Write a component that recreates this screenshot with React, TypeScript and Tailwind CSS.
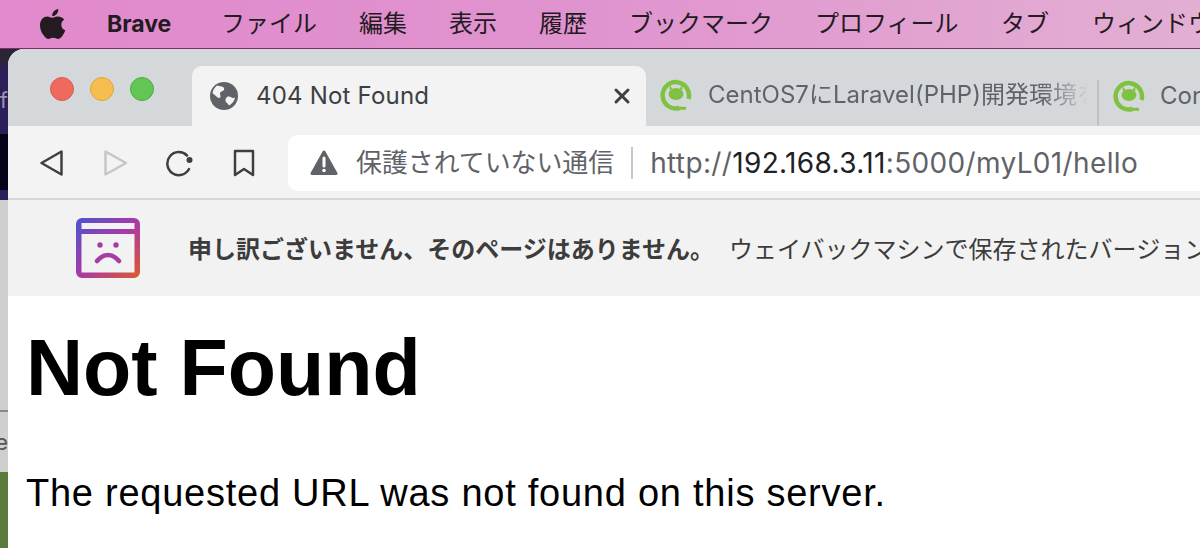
import type { ReactNode } from 'react';
import { X } from 'lucide-react';

const menus = [
  { label: 'ファイル', w: 'w-[138px]' },
  { label: '編集', w: 'w-[90px]' },
  { label: '表示', w: 'w-[90px]' },
  { label: '履歴', w: 'w-[90px]' },
  { label: 'ブックマーク', w: 'w-[186px]' },
  { label: 'プロフィール', w: 'w-[186px]' },
  { label: 'タブ', w: 'w-[91px]' },
  { label: 'ウィンドウ', w: 'w-[120px]' },
];

function AppleLogo() {
  return (
    <svg width="26" height="32" viewBox="0 0 26 32" className="shrink-0 text-[#231a22]">
      <path
        fill="currentColor"
        d="M18.3 1c.2 2-.5 3.700-1.600 5-1.100 1.300-2.800 2.300-4.500 2.100-.2-1.800.6-3.600 1.600-4.800C15 2 16.800 1.100 18.300 1zM24.300 11.500c-1.900 1.200-3 3-3 5.200 0 2.600 1.500 4.600 4 5.600-.6 1.800-1.400 3.400-2.500 5-1.400 2-2.700 3.600-4.600 3.600-1.900 0-2.700-1.200-5-1.200-2.200 0-3.200 1.200-5 1.200-1.900 0-3.300-1.800-4.700-3.800C1.300 24.700 0 20.900 0 17.300c0-5.700 3.700-8.800 7.300-8.800 2 0 3.600 1.300 4.800 1.300 1.200 0 3-1.400 5.300-1.400 2.800 0 5.300 1 6.900 3.100z"
      />
    </svg>
  );
}

function Globe() {
  return (
    <svg width="28" height="28" viewBox="0 0 28 28" className="shrink-0">
      <circle cx="14" cy="14" r="14" fill="#5f6368" />
      <path
        fill="#f3f3f3"
        d="M7 3.500c2.500 1 4.500.5 6 1.500 1.500 1 1.500 2.500.5 3.500-1 1-3 1-3.500 2.500-.4 1.300.8 2.500.5 3.800-.3 1.200-1.700 1.400-2.800.7C5.500 14 3.800 12 2.500 11 3 8 4.800 5.200 7 3.500zM17 15c1.500-.8 3.500-.3 4.500.5 1 .8 2.500.5 3.500 0-.6 3.500-2.800 6.500-6 8-.6-1.500-1.800-2.200-2.800-3.300-1.200-1.300-1-4 .8-5.200z"
      />
    </svg>
  );
}

function SiteIcon() {
  return (
    <svg width="32" height="32" viewBox="0 0 32 32" className="shrink-0">
      <path d="M28.500 20a13.200 13.200 0 1 0-9 9" fill="none" stroke="#7fc241" strokeWidth="4.500" />
      <path d="M19 29.200h7" stroke="#7fc241" strokeWidth="3" />
      <ellipse cx="16" cy="15" rx="7.500" ry="6" fill="#7fc241" />
      <path d="M10 6l2.500 4-3 1zM22 6l-2.500 4 3 1z" fill="#7fc241" />
    </svg>
  );
}

function SadWindow() {
  return (
    <svg width="64" height="60" viewBox="0 0 64 60" className="shrink-0">
      <defs>
        <linearGradient id="sad" x1="0" y1="0" x2="1" y2="1">
          <stop offset="0" stopColor="#4b54d2" />
          <stop offset="0.5" stopColor="#a83aa6" />
          <stop offset="1" stopColor="#dc5a2c" />
        </linearGradient>
      </defs>
      <path
        fillRule="evenodd"
        fill="url(#sad)"
        d="M6 0h52a6 6 0 0 1 6 6v48a6 6 0 0 1-6 6H6a6 6 0 0 1-6-6V6a6 6 0 0 1 6-6zM5.500 5v6h53V5zM5.500 16v38.500h53V16z"
      />
      <circle cx="24" cy="27" r="2.700" fill="#a83aa6" />
      <circle cx="40" cy="27" r="2.700" fill="#a83aa6" />
      <path d="M21 43c3-3.500 7-6 11-6s8 2.500 11 6" fill="none" stroke="#a83aa6" strokeWidth="4.500" strokeLinecap="round" />
    </svg>
  );
}

function NavIcon({ children }: { children: ReactNode }) {
  return (
    <svg width="28" height="28" viewBox="0 0 28 28" fill="none" strokeWidth="2.500" strokeLinejoin="round" strokeLinecap="round" className="shrink-0">
      {children}
    </svg>
  );
}

function Toolbar() {
  return (
    <div className="flex h-[74px] shrink-0 items-center border-b-2 border-[#d5d8db] bg-[#f3f3f3] pt-[2px]">
      <div className="flex w-[280px] shrink-0 items-center pl-[30px]">
        <div className="w-[63px]">
          <NavIcon>
            <path d="M23.500 2.500v23L3.500 14z" stroke="#3c4043" />
          </NavIcon>
        </div>
        <div className="w-[64px]">
          <NavIcon>
            <path d="M4.500 2.500v23L25 14z" stroke="#c6c6c6" />
          </NavIcon>
        </div>
        <div className="w-[65px]">
          <NavIcon>
            <path d="M24 20a11.500 11.500 0 1 1-2-13.500" stroke="#3c4043" />
            <circle cx="24.500" cy="11" r="3" fill="#3c4043" />
          </NavIcon>
        </div>
        <NavIcon>
          <path d="M5 2h18v24l-9-6-9 6z" stroke="#3c4043" />
        </NavIcon>
      </div>
      <div className="flex h-[56px] min-w-0 flex-1 items-center overflow-hidden whitespace-nowrap rounded-l-[10px] bg-white pl-[22px]">
        <svg width="28" height="26" viewBox="0 0 28 26" className="shrink-0">
          <path d="M14 2L26 23.500H2z" fill="#5f6368" stroke="#5f6368" strokeWidth="3" strokeLinejoin="round" />
          <path d="M14 8v8" stroke="#fff" strokeWidth="3" strokeLinecap="round" />
          <circle cx="14" cy="20.500" r="1.800" fill="#fff" />
        </svg>
        <span className="ml-[18px] text-[25.900px] text-[#5f6368]">保護されていない通信</span>
        <span className="ml-[17px] h-[32px] w-[2px] shrink-0 bg-[#c4c7c9]" />
        <span className="ml-[17px] text-[28px] tracking-[0.35px] text-[#5f6368]">
          http://<span className="text-[#202124]">192.168.3.11</span>:5000/myL01/hello
        </span>
      </div>
    </div>
  );
}

function App() {
  return (
    <div className="flex h-[548px] w-[1200px] flex-col overflow-hidden bg-[#2a2535] font-['Inter','Liberation_Sans','Noto_Sans_CJK_JP',sans-serif]">
      <div className="flex h-[49px] shrink-0 items-center overflow-hidden whitespace-nowrap border-b border-[#7c2a72] bg-[linear-gradient(90deg,#e189cc_0%,#e094cf_50%,#e3afd3_100%)] pl-[40px] text-[24px] text-[#231a22]">
        <AppleLogo />
        <span className="ml-[41px] w-[114px] shrink-0 text-[23px] font-bold">Brave</span>
        {menus.map((m) => (
          <span key={m.label} className={`${m.w} shrink-0`}>
            {m.label}
          </span>
        ))}
      </div>
      <div className="flex min-h-0 flex-1">
        <div className="flex w-[8px] shrink-0 flex-col overflow-hidden">
          <div className="h-[16px] shrink-0 bg-[#2a2535]" />
          <div className="flex h-[69px] shrink-0 items-center justify-end whitespace-nowrap bg-[#2a1f5a] text-[22px] leading-none text-[#9b96ad]">
            f
          </div>
          <div className="h-[56px] shrink-0 bg-[#05031a]" />
          <div className="h-[10px] shrink-0 bg-[#2a1f5a]" />
          <div className="h-[212px] shrink-0 border-b-2 border-dashed border-[#8a8a8a] bg-[#cfcfcf]" />
          <div className="flex h-[60px] shrink-0 items-center justify-end whitespace-nowrap bg-[#cfcfcf] text-[22px] leading-none text-[#555]">
            e
          </div>
          <div className="flex-1 bg-[#5a7a3c]" />
        </div>
        <div className="flex min-w-0 flex-1 flex-col overflow-hidden rounded-tl-[16px] bg-white">
          <div className="flex h-[77px] shrink-0 items-end bg-[#d5d8db]">
            <div className="flex w-[184px] shrink-0 gap-[16px] self-start pl-[42px] pt-[28px]">
              <span className="size-6 rounded-full border border-[#dd5a50] bg-[#ee6a5f]" />
              <span className="size-6 rounded-full border border-[#dfa53b] bg-[#f6be50]" />
              <span className="size-6 rounded-full border border-[#4fae41] bg-[#62c554]" />
            </div>
            <div className="flex h-[60px] w-[454px] shrink-0 items-center rounded-t-[10px] bg-[#f3f3f3] pl-[18px] pr-[12px]">
              <Globe />
              <span className="ml-[18px] flex-1 whitespace-nowrap text-[24px] tracking-[0.2px] text-[#3c4043]">404 Not Found</span>
              <X size={24} strokeWidth={3} className="text-[#3c4043]" />
            </div>
            <div className="flex h-[60px] w-[451px] shrink-0 items-center pb-[2px] pl-[14px] pr-[9px]">
              <SiteIcon />
              <span className="ml-[16px] min-w-0 flex-1 overflow-hidden whitespace-nowrap text-[24px] text-[#5f6368] [mask-image:linear-gradient(90deg,#000_88%,transparent)]">
                CentOS7にLaravel(PHP)開発環境を
              </span>
            </div>
            <div className="flex h-[46px] min-w-0 flex-1 items-center self-end border-l-2 border-[#c0c3c6] pb-[14px] pl-[14px]">
              <SiteIcon />
              <span className="ml-[15px] whitespace-nowrap text-[24px] text-[#5f6368]">Con</span>
            </div>
          </div>
          <Toolbar />
          <div className="flex h-[96px] shrink-0 items-center overflow-hidden whitespace-nowrap bg-[#f2f2f2] pl-[68px]">
            <SadWindow />
            <span className="ml-[48px] mt-[4px] text-[24px] font-bold text-[#3c3c3c]">申し訳ございません、そのページはありません。</span>
            <span className="ml-[15px] mt-[4px] text-[24px] text-[#3c3c3c]">ウェイバックマシンで保存されたバージョン</span>
          </div>
          <main className="min-h-0 flex-1 pl-[18px] font-['Liberation_Sans',Arial,sans-serif] text-black">
            <h1 className="mt-[27px] text-[79px] font-bold leading-[90px]">Not Found</h1>
            <p className="mt-[58px] text-[38px] leading-[44px] tracking-[0.75px]">The requested URL was not found on this server.</p>
          </main>
        </div>
      </div>
    </div>
  );
}

export default App;
